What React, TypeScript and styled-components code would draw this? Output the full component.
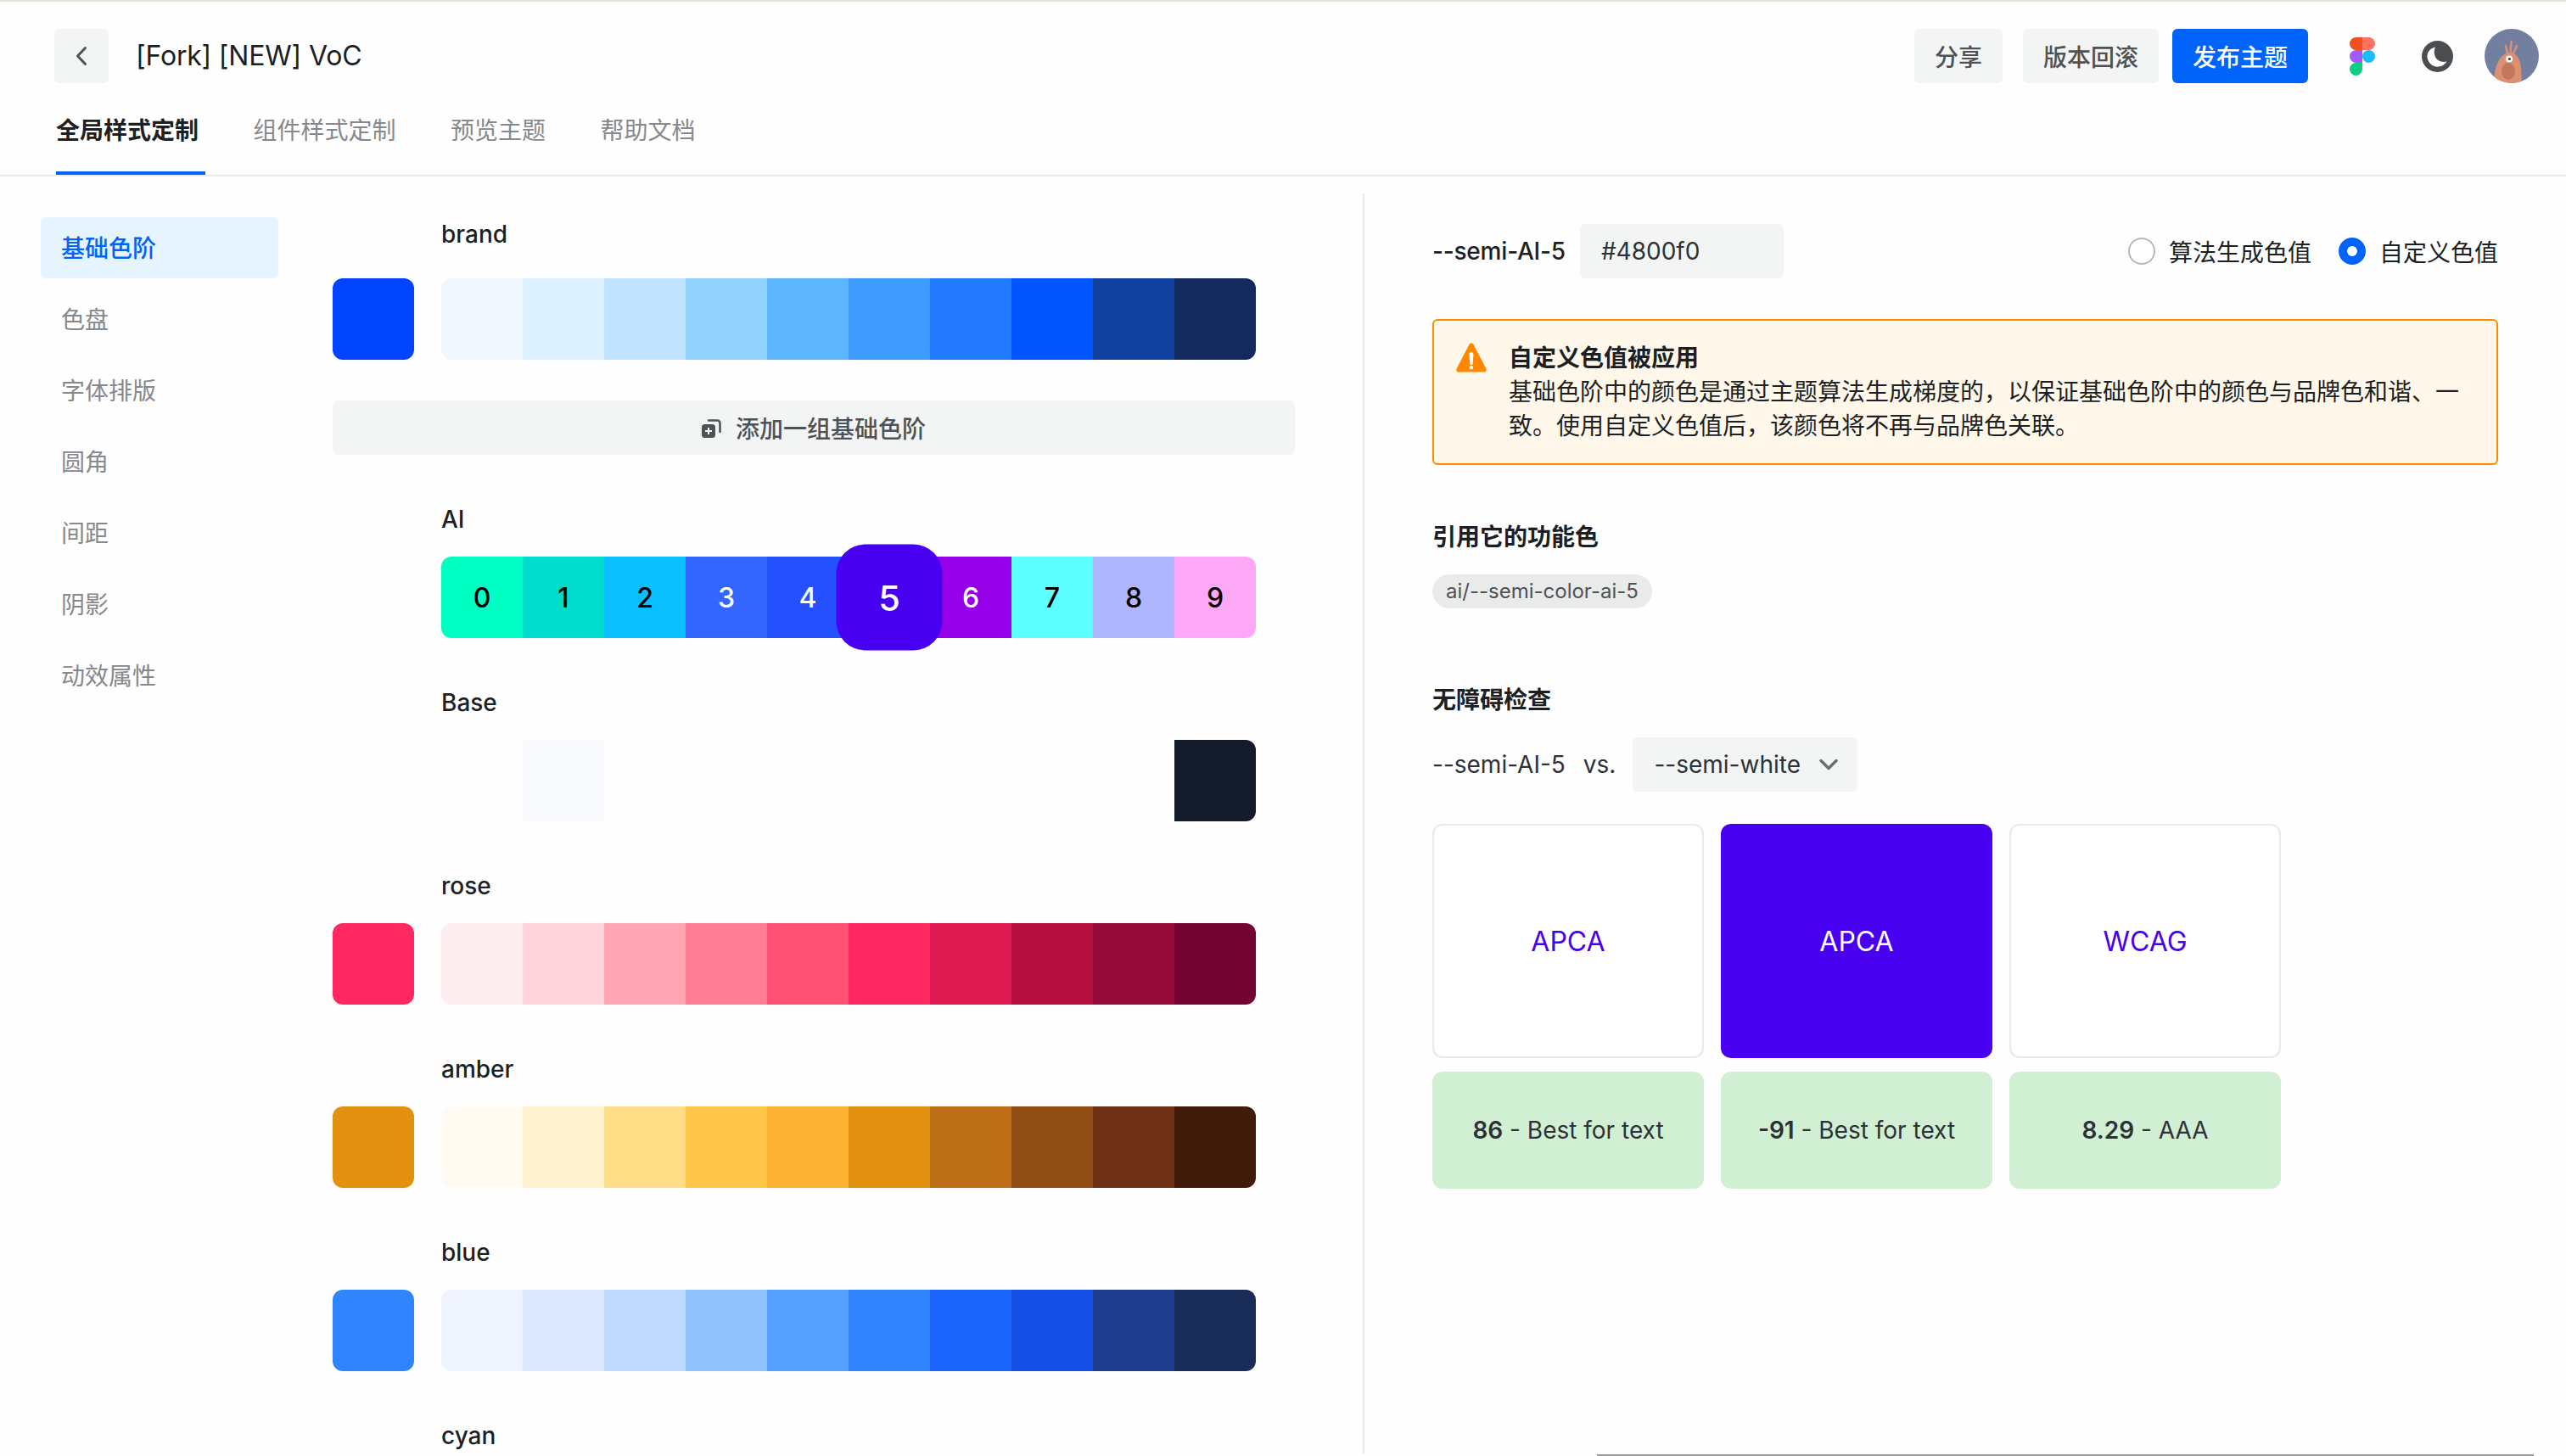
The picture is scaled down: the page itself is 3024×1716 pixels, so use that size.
import React from "react";
import styled, { createGlobalStyle } from "styled-components";

const GlobalStyle = createGlobalStyle`
  html, body {
    margin: 0;
    padding: 0;
    background: #fefefe;
    font-family: Inter, "Noto Sans CJK SC", sans-serif;
    color: #1c1f23;
  }
  * {
    box-sizing: border-box;
  }
`;

const Page = styled.div`
  position: relative;
  width: 3024px;
  height: 1716px;
  overflow: hidden;
  border-top: 2px solid #e0e5d6;
  background: #fefefe;
`;

const ScrollThumb = styled.div`
  position: absolute;
  left: 1882px;
  bottom: 0;
  width: 1104px;
  height: 2px;
  background: #9a9a9a;
`;

const TopBar = styled.div`
  display: flex;
  align-items: center;
  height: 64px;
  margin-top: 32px;
  padding: 0 32px 0 64px;
`;

const BackButton = styled.div`
  display: flex;
  align-items: center;
  justify-content: center;
  width: 64px;
  height: 64px;
  border-radius: 6px;
  background: #f3f4f4;
`;

const Title = styled.div`
  margin-left: 32px;
  font-size: 32px;
  line-height: 44px;
  letter-spacing: -0.2px;
  flex: 1;
`;

const Button = styled.div<{ $primary?: boolean; $gap?: number }>`
  display: flex;
  align-items: center;
  justify-content: center;
  height: 64px;
  padding: 0 24px;
  margin-left: ${(p) => p.$gap ?? 24}px;
  border-radius: 6px;
  font-size: 28px;
  font-weight: 500;
  background: ${(p) => (p.$primary ? "#0064fa" : "#f3f4f4")};
  color: ${(p) => (p.$primary ? "#fff" : "#4f5255")};
`;

const IconSlot = styled.div<{ $left: number; $width: number }>`
  display: flex;
  align-items: center;
  justify-content: center;
  margin-left: ${(p) => p.$left}px;
  width: ${(p) => p.$width}px;
  height: 64px;
`;

const Tabs = styled.div`
  display: flex;
  gap: 56.5px;
  height: 108px;
  padding: 36px 0 0 66px;
`;

const Tab = styled.div<{ $active?: boolean }>`
  height: 72px;
  padding-right: 8px;
  font-size: 28px;
  line-height: 40px;
  font-weight: ${(p) => (p.$active ? 600 : 400)};
  color: ${(p) => (p.$active ? "#1c1f23" : "#86888b")};
  border-bottom: 4px solid ${(p) => (p.$active ? "#0064fa" : "transparent")};
`;

const Rule = styled.div`
  height: 2px;
  background: #e9e9e9;
`;

const Body = styled.div`
  display: flex;
  height: 1505px;
`;

const Sidebar = styled.div`
  display: flex;
  flex-direction: column;
  gap: 12px;
  width: 280px;
  margin: 48px 64px 0 48px;
`;

const NavItem = styled.div<{ $active?: boolean }>`
  height: 72px;
  padding: 1px 0 0 24px;
  border-radius: 6px;
  font-size: 28px;
  line-height: 72px;
  font-weight: ${(p) => (p.$active ? 500 : 400)};
  color: ${(p) => (p.$active ? "#0064fa" : "#86888b")};
  background: ${(p) => (p.$active ? "#e6f4ff" : "transparent")};
`;

const Scales = styled.div`
  width: 1134px;
  margin-right: 80px;
  padding-top: 48px;
`;

const ScaleRow = styled.div<{ $labelGap: number; $after: number }>`
  display: grid;
  grid-template-columns: 96px 960px;
  column-gap: 32px;
  row-gap: ${(p) => p.$labelGap}px;
  margin-bottom: ${(p) => p.$after}px;
`;

const ScaleName = styled.div`
  grid-column: 2;
  font-size: 28px;
  line-height: 40px;
  font-weight: 500;
  color: #1c1f23;
`;

const MainSwatch = styled.div<{ $color: string }>`
  grid-column: 1;
  height: 96px;
  border-radius: 12px;
  background: ${(p) => p.$color};
`;

const Strip = styled.div`
  grid-column: 2;
  display: flex;
  height: 96px;
  position: relative;
`;

const Step = styled.div<{ $color: string; $selected?: boolean; $light?: boolean }>`
  display: flex;
  align-items: center;
  justify-content: center;
  width: 96px;
  height: 96px;
  background: ${(p) => p.$color};
  color: ${(p) => (p.$light ? "#fff" : "#000")};
  font-size: 32px;
  font-weight: 500;
  &:first-child {
    border-radius: 12px 0 0 12px;
  }
  &:last-child {
    border-radius: 0 12px 12px 0;
  }
  ${(p) =>
    p.$selected &&
    `
    position: relative;
    transform: scale(1.3);
    border-radius: 26px;
    z-index: 1;
  `}
`;

const AddScale = styled.div`
  display: flex;
  align-items: center;
  justify-content: center;
  gap: 17px;
  height: 64px;
  margin-bottom: 56px;
  border-radius: 6px;
  background: #f3f4f4;
  color: #4f5255;
  font-size: 28px;
  font-weight: 500;
`;

const Detail = styled.div`
  flex: 1;
  margin-top: 20px;
  padding: 36px 80px 0;
  border-left: 2px solid #e9e9e9;
`;

const DetailHead = styled.div`
  display: flex;
  align-items: center;
  height: 64px;
`;

const VarName = styled.div`
  font-size: 28px;
  font-weight: 500;
  letter-spacing: -0.2px;
  margin-right: 17px;
`;

const HexInput = styled.div`
  width: 240px;
  height: 64px;
  padding-left: 25px;
  border-radius: 6px;
  background: #f3f4f4;
  font-size: 28px;
  line-height: 64px;
  color: #2e3135;
  flex: none;
`;

const RadioGroup = styled.div`
  display: flex;
  align-items: center;
  margin-left: auto;
  gap: 32px;
`;

const RadioItem = styled.div`
  display: flex;
  align-items: center;
  gap: 16px;
  font-size: 28px;
  color: #1c1f23;
`;

const RadioDot = styled.span<{ $checked?: boolean }>`
  width: 32px;
  height: 32px;
  border-radius: 50%;
  background: #fff;
  border: ${(p) => (p.$checked ? "10px solid #0064fa" : "2px solid #b5b7b9")};
`;

const Alert = styled.div`
  display: flex;
  gap: 26px;
  margin-top: 48px;
  padding: 24px 24px 24px 26px;
  border: 2px solid #ff8800;
  border-radius: 6px;
  background: #fff8ea;
  font-size: 28px;
  line-height: 40px;
  color: #1c1f23;
  svg {
    flex: none;
    margin-top: 2px;
  }
`;

const AlertBody = styled.div`
  flex: 1;
`;

const AlertTitle = styled.div`
  font-weight: 600;
`;

const SectionTitle = styled.div<{ $top: number }>`
  margin-top: ${(p) => p.$top}px;
  font-size: 28px;
  line-height: 40px;
  font-weight: 600;
`;

const Tag = styled.div`
  display: inline-block;
  margin-top: 24px;
  height: 40px;
  padding: 0 16px;
  border-radius: 20px;
  background: #e9eaea;
  color: #4f5255;
  font-size: 24px;
  line-height: 40px;
`;

const CompareRow = styled.div`
  display: flex;
  align-items: center;
  margin-top: 24px;
  font-size: 28px;
  color: #2e3135;
`;

const Versus = styled.span`
  margin-left: 21px;
  margin-right: 20px;
`;

const Select = styled.div`
  display: flex;
  align-items: center;
  justify-content: space-between;
  width: 265px;
  height: 64px;
  padding: 0 21px 0 25px;
  border-radius: 6px;
  background: #f3f4f4;
`;

const Checks = styled.div`
  display: grid;
  grid-template-columns: repeat(3, 320px);
  grid-template-rows: 276px 138px;
  column-gap: 20px;
  row-gap: 16px;
  margin-top: 38px;
`;

const Sample = styled.div<{ $filled?: boolean }>`
  display: flex;
  align-items: center;
  justify-content: center;
  border-radius: 12px;
  border: 2px solid ${(p) => (p.$filled ? "#4800f0" : "#e9e9e9")};
  background: ${(p) => (p.$filled ? "#4800f0" : "#fff")};
  color: ${(p) => (p.$filled ? "#fff" : "#4800f0")};
  font-size: 32px;
`;

const Score = styled.div`
  display: flex;
  align-items: center;
  justify-content: center;
  gap: 0.28em;
  border-radius: 12px;
  background: #d1efd3;
  font-size: 28px;
  color: #2e3135;
  b {
    font-weight: 600;
  }
`;

interface Scale {
  name: string;
  main?: string;
  steps: string[];
}

const scalesAfterAdd: Scale[] = [
  {
    name: "Base",
    steps: ["#fefefe", "#f8f9fc", "#fefefe", "#fefefe", "#fefefe", "#fefefe", "#fefefe", "#fefefe", "#fefefe", "#141c2b"],
  },
  {
    name: "rose",
    main: "#ff2860",
    steps: ["#ffeef0", "#ffd3dc", "#ffa6b5", "#ff7e96", "#ff5075", "#ff2860", "#dd1b52", "#b50f42", "#950a38", "#730430"],
  },
  {
    name: "amber",
    main: "#e1900f",
    steps: ["#fffbf0", "#fff4cf", "#ffde88", "#ffc64a", "#fcb334", "#e1900f", "#bd6f17", "#904d13", "#6e3116", "#401c0a"],
  },
  {
    name: "blue",
    main: "#3085fe",
    steps: ["#eff4fe", "#dbe8fd", "#c0d9fe", "#90c2fe", "#56a0ff", "#3085fe", "#1c65fd", "#164fe6", "#1e3c8d", "#1a2c58"],
  },
];

const brandSteps = ["#f0f7ff", "#dcf0ff", "#c2e3fe", "#91d2ff", "#5eb6ff", "#409dff", "#247aff", "#0055ff", "#103f9e", "#132a5e"];
const aiSteps = ["#00ffc2", "#00dccc", "#0abfff", "#3366ff", "#2450ff", "#4800f0", "#9500e8", "#5dffff", "#b0b5ff", "#ffa8f8"];

function FigmaLogo() {
  return (
    <svg width="30" height="45" viewBox="0 0 30 45">
      <path d="M15 0H7.5a7.5 7.5 0 0 0 0 15H15z" fill="#f24e1e" />
      <path d="M15 0h7.5a7.5 7.5 0 0 1 0 15H15z" fill="#ff7262" />
      <path d="M15 15H7.5a7.5 7.5 0 0 0 0 15H15z" fill="#a259ff" />
      <circle cx="22.5" cy="22.5" r="7.5" fill="#1abcfe" />
      <path d="M15 30H7.5A7.5 7.5 0 1 0 15 37.5z" fill="#0acf83" />
    </svg>
  );
}

function MoonIcon() {
  return (
    <svg width="37" height="37" viewBox="0 0 37 37">
      <circle cx="18.5" cy="18.5" r="18.5" fill="#4b4e51" />
      <path d="M16 7.5C9.5 9 6 14 6.5 19.5 7.5 27 14 31.500 20.500 30.500c4-.6 7-2.800 9-6-6 1.500-11.500-.8-13.800-6-1.400-3.500-1.400-7.500.3-11z" fill="#fff" />
    </svg>
  );
}

function Avatar() {
  return (
    <svg width="64" height="64" viewBox="0 0 64 64">
      <defs>
        <clipPath id="avatar-clip">
          <circle cx="32" cy="32" r="32" />
        </clipPath>
      </defs>
      <g clipPath="url(#avatar-clip)">
        <rect width="64" height="64" fill="#737fa1" />
        <path d="M27 29l-2-9M30.500 28l1-13M34 29l4-9" stroke="#dd9070" strokeWidth="2.500" strokeLinecap="round" fill="none" />
        <path d="M11 64c0-19 7-36 19-36 8 0 12 8 13 18l1 18z" fill="#dd9070" />
        <ellipse cx="28" cy="50" rx="8" ry="10" fill="#c4775c" />
        <circle cx="29" cy="35.500" r="4" fill="#fff" />
        <circle cx="29.500" cy="35.500" r="1.500" fill="#33303a" />
      </g>
    </svg>
  );
}

function WarningIcon() {
  return (
    <svg width="36" height="36" viewBox="0 0 36 36">
      <path d="M15.600 1.800c1-1.800 3.800-1.800 4.800 0l15 28.800c1 1.900-.3 4-2.400 4H3c-2.100 0-3.400-2.100-2.400-4z" fill="#ff8800" />
      <path d="M15.500 13.500a2.500 2.500 0 0 1 5 0l-.8 11a1.700 1.700 0 0 1-3.400 0z" fill="#fff" />
      <circle cx="18" cy="29" r="2.200" fill="#fff" />
    </svg>
  );
}

function CopyAddIcon() {
  return (
    <svg width="23" height="23" viewBox="0 0 23 23">
      <path d="M8 2.500h10.500a3 3 0 0 1 3 3V16" fill="none" stroke="#4f5255" strokeWidth="2.500" strokeLinecap="round" />
      <rect y="7" width="16" height="16" rx="3.500" fill="#4f5255" />
      <path d="M8 11v8M4 15h8" stroke="#f3f4f4" strokeWidth="2" />
    </svg>
  );
}

function ScaleBlock({ scale }: { scale: Scale }) {
  return (
    <ScaleRow $labelGap={24} $after={56}>
      <ScaleName>{scale.name}</ScaleName>
      {scale.main && <MainSwatch $color={scale.main} />}
      <Strip>
        {scale.steps.map((c, i) => (
          <Step key={i} $color={c} />
        ))}
      </Strip>
    </ScaleRow>
  );
}

export default function App() {
  return (
    <>
      <GlobalStyle />
      <Page>
        <TopBar>
          <BackButton>
            <svg width="24" height="24" viewBox="0 0 24 24">
              <path d="M16.500 2.500 7.500 12l9 9.500" fill="none" stroke="#4f5255" strokeWidth="3" strokeLinecap="round" strokeLinejoin="round" />
            </svg>
          </BackButton>
          <Title>[Fork] [NEW] VoC</Title>
          <Button>分享</Button>
          <Button>版本回滚</Button>
          <Button $primary $gap={16}>
            发布主题
          </Button>
          <IconSlot $left={49} $width={30}>
            <FigmaLogo />
          </IconSlot>
          <IconSlot $left={55} $width={37}>
            <MoonIcon />
          </IconSlot>
          <IconSlot $left={37} $width={64}>
            <Avatar />
          </IconSlot>
        </TopBar>
        <Tabs>
          <Tab $active>全局样式定制</Tab>
          <Tab>组件样式定制</Tab>
          <Tab>预览主题</Tab>
          <Tab>帮助文档</Tab>
        </Tabs>
        <Rule />
        <Body>
          <Sidebar>
            <NavItem $active>基础色阶</NavItem>
            <NavItem>色盘</NavItem>
            <NavItem>字体排版</NavItem>
            <NavItem>圆角</NavItem>
            <NavItem>间距</NavItem>
            <NavItem>阴影</NavItem>
            <NavItem>动效属性</NavItem>
          </Sidebar>
          <Scales>
            <ScaleRow $labelGap={32} $after={48}>
              <ScaleName>brand</ScaleName>
              <MainSwatch $color="#0044ff" />
              <Strip>
                {brandSteps.map((c, i) => (
                  <Step key={i} $color={c} />
                ))}
              </Strip>
            </ScaleRow>
            <AddScale>
              <CopyAddIcon />
              添加一组基础色阶
            </AddScale>
            <ScaleRow $labelGap={24} $after={56}>
              <ScaleName>AI</ScaleName>
              <Strip>
                {aiSteps.map((c, i) => (
                  <Step key={i} $color={c} $selected={i === 5} $light={i >= 3 && i <= 6}>
                    {i}
                  </Step>
                ))}
              </Strip>
            </ScaleRow>
            {scalesAfterAdd.map((s) => (
              <ScaleBlock key={s.name} scale={s} />
            ))}
            <ScaleRow $labelGap={24} $after={0}>
              <ScaleName>cyan</ScaleName>
            </ScaleRow>
          </Scales>
          <Detail>
            <DetailHead>
              <VarName>--semi-AI-5</VarName>
              <HexInput>#4800f0</HexInput>
              <RadioGroup>
                <RadioItem>
                  <RadioDot />
                  算法生成色值
                </RadioItem>
                <RadioItem>
                  <RadioDot $checked />
                  自定义色值
                </RadioItem>
              </RadioGroup>
            </DetailHead>
            <Alert>
              <WarningIcon />
              <AlertBody>
                <AlertTitle>自定义色值被应用</AlertTitle>
                基础色阶中的颜色是通过主题算法生成梯度的，以保证基础色阶中的颜色与品牌色和谐、一致。使用自定义色值后，该颜色将不再与品牌色关联。
              </AlertBody>
            </Alert>
            <SectionTitle $top={65}>引用它的功能色</SectionTitle>
            <Tag>ai/--semi-color-ai-5</Tag>
            <SectionTitle $top={88}>无障碍检查</SectionTitle>
            <CompareRow>
              --semi-AI-5
              <Versus>vs.</Versus>
              <Select>
                --semi-white
                <svg width="26" height="26" viewBox="0 0 26 26">
                  <path d="M4 8.500l9 9 9-9" fill="none" stroke="#6b6e71" strokeWidth="3.500" strokeLinecap="round" strokeLinejoin="round" />
                </svg>
              </Select>
            </CompareRow>
            <Checks>
              <Sample>APCA</Sample>
              <Sample $filled>APCA</Sample>
              <Sample>WCAG</Sample>
              <Score>
                <b>86</b> - Best for text
              </Score>
              <Score>
                <b>-91</b> - Best for text
              </Score>
              <Score>
                <b>8.29</b> - AAA
              </Score>
            </Checks>
          </Detail>
        </Body>
        <ScrollThumb />
      </Page>
    </>
  );
}
